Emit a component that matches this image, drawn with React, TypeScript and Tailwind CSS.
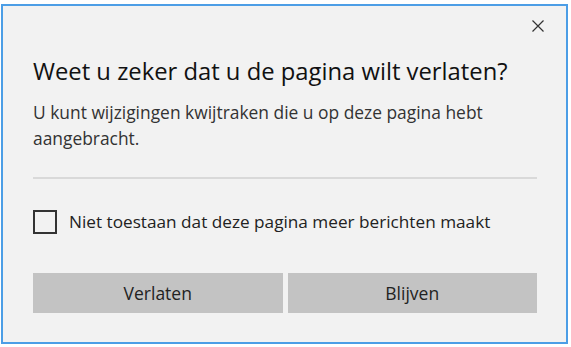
import React from "react";

export default function App() {
  return (
    <div className="w-[571px] h-[347px] bg-white overflow-hidden" style={{ fontFamily: '"Open Sans", "Noto Sans", sans-serif' }}>
      <div className="ml-[1px] mt-[4px] w-[567px] h-[340px] border-2 border-[#4c9ee6] bg-[#f2f2f2] flex flex-col">
        <div className="flex justify-end pt-[14px] pr-[22px]">
          <svg width="12" height="12" viewBox="0 0 12 12">
            <path d="M0.5 0.5 L11.5 11.5 M11.5 0.5 L0.5 11.5" stroke="#333" strokeWidth="1.2" />
          </svg>
        </div>

        <div className="px-[30px]">
          <h1 className="mt-[24px] text-[23.8px] leading-[30px] text-[#111] whitespace-nowrap">
            Weet u zeker dat u de pagina wilt verlaten?
          </h1>
          <p className="mt-[13px] text-[17.4px] leading-[26px] text-[#333] w-[500px]">
            U kunt wijzigingen kwijtraken die u op deze pagina hebt aangebracht.
          </p>

          <div className="mt-[26px] mr-[-1px] h-[2px] bg-[#d9d9d9]" />

          <label className="mt-[30px] flex items-center gap-[12px]">
            <span className="w-[24px] h-[24px] border-2 border-[#333] bg-[#f2f2f2]" />
            <span className="text-[17.2px] text-[#222] whitespace-nowrap">
              Niet toestaan dat deze pagina meer berichten maakt
            </span>
          </label>

          <div className="mt-[38px] flex gap-[5px] mr-[-1px]">
            <button className="flex-1 h-[40px] bg-[#c3c3c3] text-[17.5px] text-[#222]">
              Verlaten
            </button>
            <button className="flex-1 h-[40px] bg-[#c3c3c3] text-[17.5px] text-[#222]">
              Blijven
            </button>
          </div>
        </div>
      </div>
    </div>
  );
}
